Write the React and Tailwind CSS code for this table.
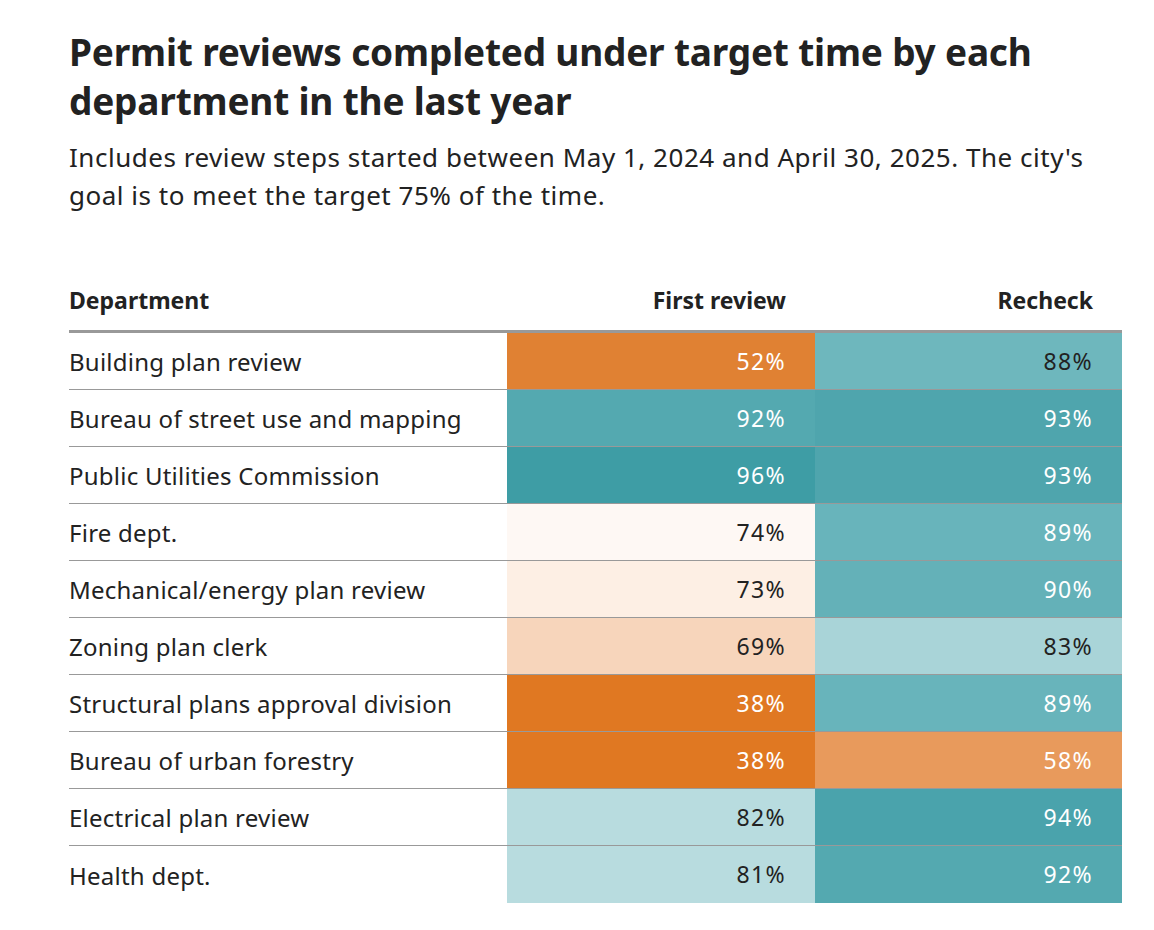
const rows = [
  { name: 'Building plan review', first: '52%', firstBg: 'bg-[#e08133]', firstLight: true, re: '88%', reBg: 'bg-[#6eb7bd]', reLight: false },
  { name: 'Bureau of street use and mapping', first: '92%', firstBg: 'bg-[#54a9b0]', firstLight: true, re: '93%', reBg: 'bg-[#4fa5ad]', reLight: true },
  { name: 'Public Utilities Commission', first: '96%', firstBg: 'bg-[#3e9da5]', firstLight: true, re: '93%', reBg: 'bg-[#4fa5ad]', reLight: true },
  { name: 'Fire dept.', first: '74%', firstBg: 'bg-[#fef8f4]', firstLight: false, re: '89%', reBg: 'bg-[#68b4bb]', reLight: true },
  { name: 'Mechanical/energy plan review', first: '73%', firstBg: 'bg-[#fdefe4]', firstLight: false, re: '90%', reBg: 'bg-[#64b1b8]', reLight: true },
  { name: 'Zoning plan clerk', first: '69%', firstBg: 'bg-[#f7d5bb]', firstLight: false, re: '83%', reBg: 'bg-[#a9d4d8]', reLight: false },
  { name: 'Structural plans approval division', first: '38%', firstBg: 'bg-[#e07822]', firstLight: true, re: '89%', reBg: 'bg-[#68b4bb]', reLight: true },
  { name: 'Bureau of urban forestry', first: '38%', firstBg: 'bg-[#e07822]', firstLight: true, re: '58%', reBg: 'bg-[#e89a5c]', reLight: true },
  { name: 'Electrical plan review', first: '82%', firstBg: 'bg-[#b8dcdf]', firstLight: false, re: '94%', reBg: 'bg-[#4aa3ac]', reLight: true },
  { name: 'Health dept.', first: '81%', firstBg: 'bg-[#b8dcdf]', firstLight: false, re: '92%', reBg: 'bg-[#54a9b0]', reLight: true },
];

const Cell = ({ value, bg, light }) => (
  <div
    className={`flex items-center justify-end pr-[29px] text-[23px] tracking-[0.06em] tabular-nums ${bg} ${
      light ? 'text-white' : 'text-[#222]'
    }`}
  >
    {value}
  </div>
);

const App = () => {
  return (
    <div className="min-h-screen bg-white pl-[69px] pr-[32px] pt-[27px] text-[#222] [font-family:'Noto_Sans',sans-serif]">

      {/* TITLE */}

      <h1 className="w-[1000px] text-[37px] font-bold leading-[49px] tracking-[-0.005em]">
        Permit reviews completed under target time by each department in the last year
      </h1>

      <p className="mt-[13px] w-[1045px] text-[26px] leading-[38px] tracking-[0.02em]">
        Includes review steps started between May 1, 2024 and April 30, 2025. The city's goal is to meet the target 75% of the time.
      </p>

      {/* TABLE */}

      <div className="mt-[61px] w-[1053px]">

        <div className="grid h-[58px] grid-cols-[438px_308px_307px] items-center border-b-[3px] border-[#999] pb-[4px] text-[23px] font-bold">
          <div>Department</div>
          <div className="pr-[29px] text-right">First review</div>
          <div className="pr-[29px] text-right">Recheck</div>
        </div>

        {rows.map((row, i) => (
          <div
            key={row.name}
            className={`grid h-[57px] grid-cols-[438px_308px_307px] ${
              i < rows.length - 1 ? 'border-b border-[#999]' : ''
            }`}
          >
            <div className="flex items-center pt-[2px] text-[24px] tracking-[0.01em]">
              {row.name}
            </div>
            <Cell value={row.first} bg={row.firstBg} light={row.firstLight} />
            <Cell value={row.re} bg={row.reBg} light={row.reLight} />
          </div>
        ))}

      </div>
    </div>
  );
};

export default App;
